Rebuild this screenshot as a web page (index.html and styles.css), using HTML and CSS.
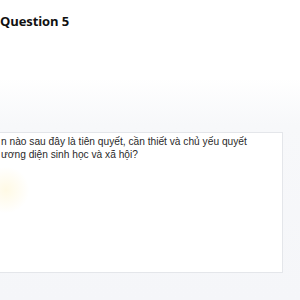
FILE: index.html
```html
<!DOCTYPE html>
<html lang="vi">
<head>
  <meta charset="UTF-8">
  <title>Question 5</title>
  <meta name="viewport" content="width=device-width,initial-scale=1">
  <link rel="stylesheet" href="styles.css">
</head>
<body>
  <div class="page">
    <h2 class="q-title">Question 5</h2>
    <div class="q-card">
      <p class="q-text">n nào sau đây là tiên quyết, cần thiết và chủ yếu quyết<br>ương diện sinh học và xã hội?</p>
      <div class="glow"></div>
    </div>
  </div>
</body>
</html>
```
FILE: styles.css
```css
html,body{margin:0;padding:0;overflow:hidden}
body{font-family:"Liberation Sans",Arial,sans-serif;color:#222;
  background:linear-gradient(#fff 0,#fff 78px,#f7f8fa 125px,#f5f6f9 100%);height:300px}
.page{position:relative;height:300px}
.q-title{margin:0;padding:12px 0 0;margin-left:0;font-family:"Open Sans",sans-serif;
  font-weight:700;font-size:13px;line-height:19px;color:#111;letter-spacing:-.1px}
.q-card{position:relative;margin:101px 0 0 -10px;width:293px;height:141px;background:#fff;
  border:1px solid #e4e6ea;box-sizing:border-box;overflow:hidden}
.q-text{margin:0;padding:3px 0 0 10px;font-size:10.2px;line-height:12.5px;color:#2a2a2a}
.glow{position:absolute;left:-8px;top:34px;width:46px;height:46px;border-radius:50%;
  background:radial-gradient(circle,rgba(255,240,180,.35) 0,rgba(255,242,200,.15) 50%,rgba(255,255,255,0) 72%)}
```
